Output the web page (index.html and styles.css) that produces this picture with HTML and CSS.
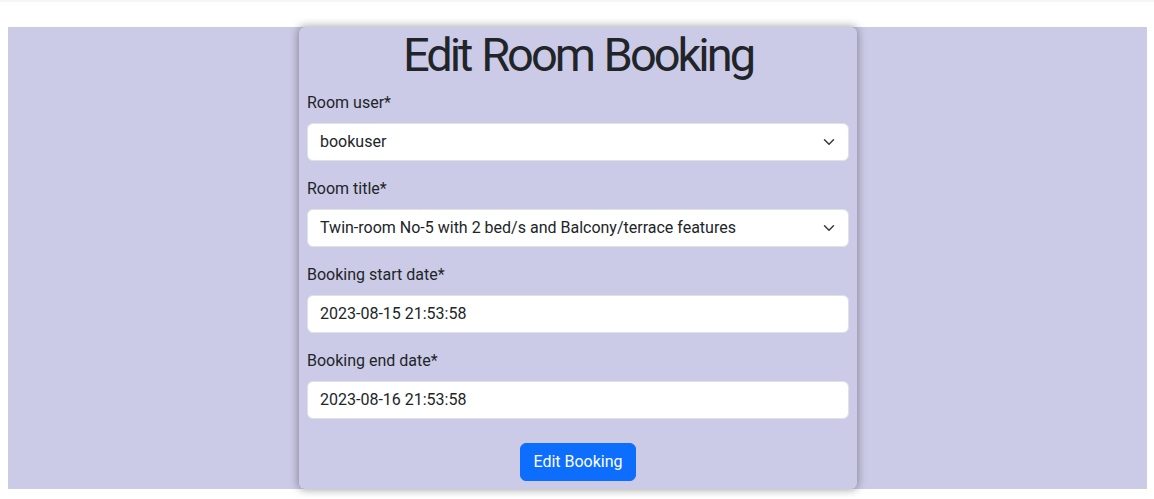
FILE: index.html
```html
<!DOCTYPE html>
<html lang="en">
<head>
<meta charset="utf-8">
<title>Edit Room Booking</title>
<link rel="stylesheet" href="styles.css">
</head>
<body>
<div class="topline"></div>
<main class="page">
  <section class="card">
    <h1 class="title">Edit Room Booking</h1>
    <form class="form">
      <div class="field">
        <label class="label">Room user*</label>
        <div class="control select">
          <span>bookuser</span>
          <svg class="chev" width="16" height="12" viewBox="0 0 16 16"><path d="m2 5 6 6 6-6" fill="none" stroke="#343a40" stroke-width="2" stroke-linecap="round" stroke-linejoin="round"/></svg>
        </div>
      </div>
      <div class="field">
        <label class="label">Room title*</label>
        <div class="control select">
          <span>Twin-room No-5 with 2 bed/s and Balcony/terrace features</span>
          <svg class="chev" width="16" height="12" viewBox="0 0 16 16"><path d="m2 5 6 6 6-6" fill="none" stroke="#343a40" stroke-width="2" stroke-linecap="round" stroke-linejoin="round"/></svg>
        </div>
      </div>
      <div class="field">
        <label class="label">Booking start date*</label>
        <div class="control"><span>2023-08-15 21:53:58</span></div>
      </div>
      <div class="field">
        <label class="label">Booking end date*</label>
        <div class="control"><span>2023-08-16 21:53:58</span></div>
      </div>
      <div class="actions">
        <button type="button" class="btn">Edit Booking</button>
      </div>
    </form>
  </section>
</main>
</body>
</html>
```
FILE: styles.css
```css
html, body {
  margin: 0;
  padding: 0;
  background: #fff;
}
body {
  padding: 0 7px 8px 8px;
  font-family: Roboto, "Liberation Sans", sans-serif;
  font-size: 16px;
  line-height: 24px;
  color: #212529;
}
.topline {
  height: 2px;
  margin: 0 -7px 0 -8px;
  background: #f6f6f6;
}
.page {
  margin-top: 25px;
  padding-left: 1px;
  background: #cccbe7;
  display: flex;
  justify-content: center;
}
.card {
  width: 558px;
  box-sizing: border-box;
  padding: 0 8px 8px;
  background: #cccbe7;
  border-radius: 6px;
  box-shadow: 0 0 9px 1px rgba(0, 0, 0, 0.35);
}
.title {
  margin: 0 0 8px;
  text-align: center;
  font-family: Roboto, "Liberation Sans", sans-serif;
  font-weight: 400;
  font-size: 47px;
  line-height: 56px;
  letter-spacing: -3px;
  word-spacing: 2px;
  color: #212529;
}
.form {
  display: flex;
  flex-direction: column;
  gap: 16px;
}
.field {
  display: flex;
  flex-direction: column;
  gap: 8px;
}
.label {
  display: block;
}
.control {
  height: 38px;
  box-sizing: border-box;
  padding: 6px 12px;
  background: #fff;
  border: 1px solid #dee2e6;
  border-radius: 6px;
  display: flex;
  align-items: center;
  justify-content: space-between;
}
.chev {
  flex: none;
  margin-right: -1px;
}
.actions {
  display: flex;
  justify-content: center;
  margin-top: 8px;
}
.btn {
  font-family: inherit;
  font-size: 16px;
  line-height: 24px;
  color: #fff;
  background: #0d6efd;
  border: 1px solid #0d6efd;
  border-radius: 6px;
  padding: 6px 12px;
  cursor: pointer;
}
```
